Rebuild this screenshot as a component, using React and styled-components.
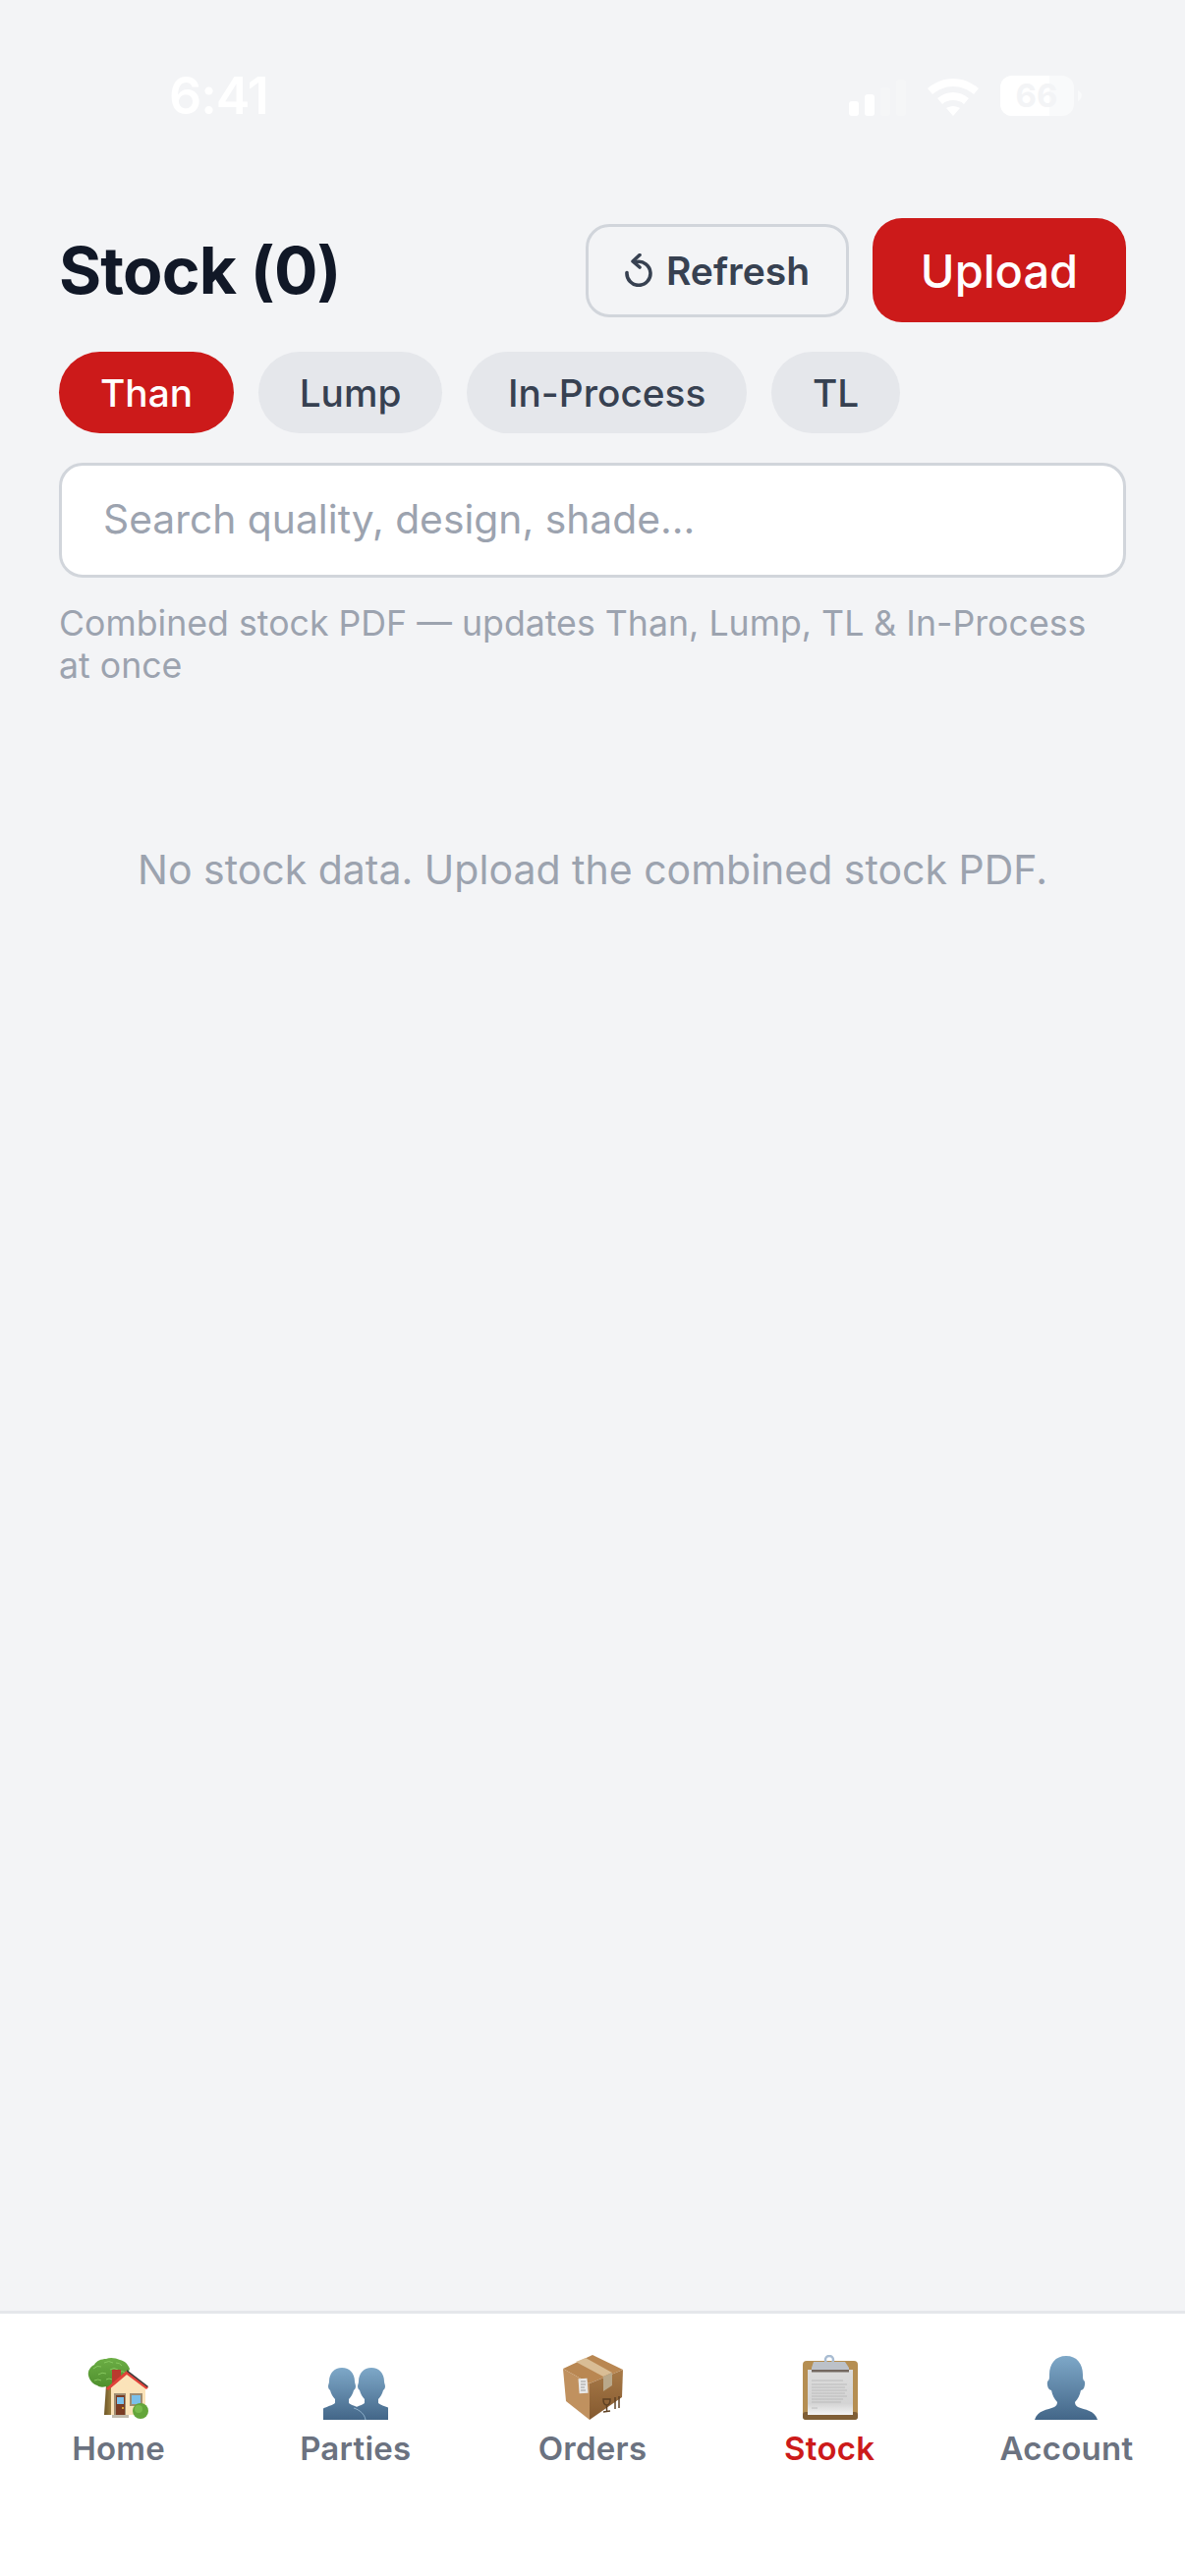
import styled, { createGlobalStyle } from "styled-components";

const GlobalStyle = createGlobalStyle`
  html, body { margin: 0; padding: 0; background: #f3f4f6; }
  * { box-sizing: border-box; }
  body { font-family: Inter, "Liberation Sans", sans-serif; }
`;

const Page = styled.div`
  height: 100vh;
  display: flex;
  flex-direction: column;
  background: #f3f4f6;
`;

const StatusBar = styled.div`
  height: 222px;
  flex: none;
  padding: 77px 105px 0 172px;
  display: flex;
  justify-content: space-between;
  align-items: flex-start;
  color: #fff;
`;

const Time = styled.span`
  font-size: 52px;
  line-height: 41px;
  font-weight: 600;
  letter-spacing: -1px;
`;

const StatusIcons = styled.div`
  display: flex;
  align-items: flex-end;
  height: 41px;
`;

const Main = styled.main`
  flex: 1;
  padding: 0 60px;
`;

const HeaderRow = styled.div`
  display: flex;
  align-items: center;
  justify-content: space-between;
  height: 106px;
`;

const Title = styled.h1`
  margin: 0;
  font-size: 66px;
  font-weight: 700;
  letter-spacing: -0.85px;
  color: #111827;
`;

const Actions = styled.div`
  display: flex;
  align-items: center;
  gap: 24px;
`;

const RefreshButton = styled.button`
  width: 268px;
  height: 95px;
  display: flex;
  align-items: center;
  justify-content: center;
  gap: 14px;
  padding: 0;
  background: transparent;
  border: 3px solid #d1d5db;
  border-radius: 24px;
  font: 600 39px Inter, sans-serif;
  color: #374151;
`;

const UploadButton = styled.button`
  width: 258px;
  height: 106px;
  padding: 0;
  background: #cc1a1a;
  border: 0;
  border-radius: 30px;
  font: 500 47px Inter, sans-serif;
  color: #fff;
`;

const Tabs = styled.div`
  display: flex;
  gap: 24.6px;
  margin-top: 30px;
`;

const Tab = styled.button`
  height: 83px;
  padding: 0 42px;
  border: 0;
  border-radius: 42px;
  background: ${(p) => (p.$active ? "#cc1a1a" : "#e5e7eb")};
  color: ${(p) => (p.$active ? "#fff" : "#374151")};
  font: 500 38.8px Inter, sans-serif;
`;

const SearchInput = styled.input`
  display: block;
  width: 100%;
  height: 117px;
  margin-top: 30px;
  padding: 0 42px 3px;
  background: #fff;
  border: 3px solid #d1d5db;
  border-radius: 24px;
  outline: none;
  font: 400 40.8px Inter, sans-serif;
  color: #111827;
  &::placeholder { color: #9ca3af; opacity: 1; }
`;

const Hint = styled.p`
  margin: 25px 0 0;
  font-size: 35.7px;
  line-height: 43px;
  color: #9ca3af;
`;

const Empty = styled.p`
  margin: 161px 0 0;
  text-align: center;
  font-size: 41px;
  line-height: 50px;
  color: #9ca3af;
`;

const Nav = styled.nav`
  flex: none;
  height: 270px;
  display: grid;
  grid-template-columns: repeat(5, 1fr);
  padding-top: 42px;
  background: #fff;
  border-top: 3px solid #e5e7eb;
`;

const NavItem = styled.div`
  display: flex;
  flex-direction: column;
  align-items: center;
  gap: 5px;
`;

const NavLabel = styled.span`
  font-size: 33px;
  line-height: 48px;
  font-weight: 600;
  letter-spacing: 0.25px;
  color: ${(p) => (p.$active ? "#cc1a1a" : "#6b7280")};
`;

const Signal = () => (
  <svg width="58" height="37" viewBox="0 0 58 37" fill="#fff">
    <rect x="0" y="22" width="10" height="15" rx="3" />
    <rect x="16" y="15" width="10" height="22" rx="3" />
    <rect x="32" y="8" width="10" height="29" rx="3" opacity="0.2" />
    <rect x="48" y="0" width="10" height="37" rx="3" opacity="0.2" />
  </svg>
);

const Wifi = () => (
  <svg width="52" height="38" viewBox="0 0 52 38" fill="#fff" style={{ marginLeft: 22 }}>
    <path d="M26 0c10 0 19 4 26 10l-5 6C41 11 34 8 26 8S11 11 5 16l-5-6C7 4 16 0 26 0z" />
    <path d="M26 14c6 0 11 2 16 6l-5 6c-3-3-7-4-11-4s-8 1-11 4l-5-6c5-4 10-6 16-6z" />
    <path d="M26 28c3 0 5 1 7 2l-7 8-7-8c2-1 4-2 7-2z" />
  </svg>
);

const Battery = () => (
  <svg width="83" height="41" viewBox="0 0 83 41" style={{ marginLeft: 22 }}>
    <defs>
      <clipPath id="batFill"><rect x="0" y="0" width="50" height="41" /></clipPath>
    </defs>
    <rect width="75" height="41" rx="12" fill="#fff" opacity="0.5" />
    <rect width="75" height="41" rx="12" fill="#fff" clipPath="url(#batFill)" />
    <path d="M79 15c2 1 4 3 4 5s-2 5-4 6z" fill="#fff" opacity="0.5" />
    <text x="37" y="32" textAnchor="middle" fontFamily="Inter" fontWeight="700" fontSize="33" fill="#f3f4f6">66</text>
  </svg>
);

const RefreshIcon = () => (
  <svg width="28" height="34" viewBox="0 0 28 34" fill="none" stroke="#374151" strokeWidth="3.6" strokeLinecap="round" strokeLinejoin="round">
    <path d="M12 8.500a12 12 0 1 1-10 11" />
    <path d="M15 1.500L8 8l7 6" />
  </svg>
);

const EmojiSvg = styled.svg`
  display: block;
  width: 66px;
  height: 66px;
`;

const HomeEmoji = () => (
  <EmojiSvg viewBox="0 0 66 66">
    <defs>
      <linearGradient id="trunkFill" x1="0" y1="0" x2="1" y2="0">
        <stop offset="0" stopColor="#6d5524" />
        <stop offset="1" stopColor="#a88c4c" />
      </linearGradient>
      <linearGradient id="crownFill" x1="0" y1="0" x2="0" y2="1">
        <stop offset="0" stopColor="#6cae45" />
        <stop offset="1" stopColor="#4f8f2e" />
      </linearGradient>
    </defs>
    <path d="M20 30h6l1 31h-9z" fill="url(#trunkFill)" />
    <path
      d="M2 21c-1-5 2-9 6-11 2-4 7-6 12-6 4-2 10-1 14 1 5 1 8 4 10 9l-6 16-18 2c-3 1-7 1-9-1-4-1-8-5-9-10z"
      fill="url(#crownFill)"
    />
    <g fill="none" stroke="#86c75e" strokeWidth="1">
      <path d="M7 14q4-4 8-2M18 8q5-3 9 0M30 8q4 0 6 3M12 20q4-3 8-1M24 15q4-3 8 0M34 17q3-1 5 1M8 26q4-2 7 0M20 25q3-2 6 0" />
    </g>
    <rect x="26" y="15" width="9" height="14" fill="#b93a2e" />
    <path d="M25 33l16-14 19 14v28H25z" fill="#fbe3b9" />
    <path d="M20 34L41 16l22 17-2 2-20-15-19 16z" fill="#e2423a" />
    <path d="M41 15l22 17-1 1-21-16z" fill="#3d3a3a" />
    <rect x="28" y="39" width="12" height="22" fill="#a08d72" />
    <rect x="30" y="41" width="9" height="20" fill="#7a3c24" />
    <rect x="31" y="43" width="7" height="7" fill="#7cc0ea" />
    <circle cx="37" cy="54" r="1" fill="#f3c13a" />
    <rect x="44" y="39" width="13" height="13" fill="#a08d72" />
    <rect x="46" y="41" width="9" height="9" fill="#7cc0ea" />
    <rect x="26" y="61" width="17" height="3" fill="#c2bcae" />
    <circle cx="55" cy="57" r="8" fill="#63a53a" />
    <circle cx="53" cy="55" r="4" fill="#79bb4c" />
  </EmojiSvg>
);

const personPath = (cx) =>
  `M${cx} 13c8 0 13 6 13 14 0 2 1 3 1 5s-1 3-2 4c-1 4-3 7-5 9v4c3 3 13 4 14 8 1 2 1 6 1 9H${cx - 22}c0-3 0-7 1-9 1-4 11-5 14-8v-4c-2-2-4-5-5-9-1-1-2-2-2-4s1-3 1-5c0-8 5-14 13-14z`;

const PartiesEmoji = () => (
  <EmojiSvg viewBox="0 0 66 66">
    <defs>
      <linearGradient id="partyBlue" x1="0" y1="0" x2="0" y2="1">
        <stop offset="0" stopColor="#7ea8c8" />
        <stop offset="1" stopColor="#436688" />
      </linearGradient>
    </defs>
    <path d={personPath(49)} fill="url(#partyBlue)" />
    <path d={personPath(19)} fill="url(#partyBlue)" />
    <path d="M31 54c6 2 11 6 12 12" fill="none" stroke="#8fb1cc" strokeWidth="1" />
  </EmojiSvg>
);

const OrdersEmoji = () => (
  <EmojiSvg viewBox="0 0 66 66">
    <defs>
      <linearGradient id="boxSide" x1="0" y1="0" x2="0" y2="1">
        <stop offset="0" stopColor="#a87a48" />
        <stop offset="1" stopColor="#84592f" />
      </linearGradient>
    </defs>
    <path d="M33 0L3 14l27 15 34-14z" fill="#b98752" />
    <path d="M3 14l27 15v37L6 47z" fill="#c0915f" />
    <path d="M30 29l34-14-1 28-33 23z" fill="url(#boxSide)" />
    <path d="M16 7l10-4 27 15-9 4z" fill="#d9bd95" />
    <path d="M44 22l9-4v13l-9 6z" fill="#b9a88a" />
    <rect x="19" y="24" width="9" height="15" fill="#e8e8e8" transform="rotate(-4 23 31)" />
    <path d="M21 27h5M21 30h5M21 33h4M21 36h5" stroke="#8a8a8a" strokeWidth="0.8" />
    <g stroke="#5f4224" strokeWidth="1.500" fill="none">
      <path d="M44 45h7c0 4-1 6-3.500 6S44 49 44 45zM47.500 51v6M44 58l7-1" />
      <path d="M56 43v12M60 42v12" />
    </g>
  </EmojiSvg>
);

const StockEmoji = () => (
  <EmojiSvg viewBox="0 0 66 66">
    <defs>
      <linearGradient id="paperFade" x1="0" y1="0" x2="0" y2="1">
        <stop offset="0" stopColor="#dcdcdc" />
        <stop offset="0.75" stopColor="#d4d4d4" />
        <stop offset="1" stopColor="#f4f4f4" />
      </linearGradient>
    </defs>
    <rect x="6" y="6" width="56" height="60" rx="4" fill="#b58e52" />
    <rect x="6" y="58" width="56" height="8" rx="3" fill="#7f5e36" />
    <rect x="11" y="15" width="46" height="46" fill="url(#paperFade)" />
    <circle cx="33" cy="5" r="4" fill="none" stroke="#a9bcd2" strokeWidth="2.500" />
    <path d="M17 7h32l4 6v3H15v-3z" fill="#bcc1c8" />
    <rect x="15" y="15" width="38" height="2.500" fill="#736860" />
    <path d="M15 26h32M15 30h36M15 33h34M15 36h36M15 39h34M15 42h36M15 45h32M15 48h30M15 54h6" stroke="#b5b5b5" strokeWidth="0.8" />
  </EmojiSvg>
);

const AccountEmoji = () => (
  <EmojiSvg viewBox="0 0 66 66">
    <defs>
      <linearGradient id="accBlue" x1="0" y1="0" x2="0" y2="1">
        <stop offset="0" stopColor="#7ea8c8" />
        <stop offset="1" stopColor="#436688" />
      </linearGradient>
    </defs>
    <path
      d="M33 1c11 0 17 8 17 19 0 3 0 5 1 6 2 1 1 6 0 8-1 1-2 2-3 2-1 5-3 9-6 12 0 2 1 4 3 5 7 3 17 3 20 13H1c3-10 13-10 20-13 2-1 3-3 3-5-3-3-5-7-6-12-1 0-2-1-3-2-1-2-2-7 0-8 1-1 1-3 1-6C16 9 22 1 33 1z"
      fill="url(#accBlue)"
    />
  </EmojiSvg>
);

const tabs = ["Than", "Lump", "In-Process", "TL"];

const navItems = [
  { label: "Home", Icon: HomeEmoji },
  { label: "Parties", Icon: PartiesEmoji },
  { label: "Orders", Icon: OrdersEmoji },
  { label: "Stock", Icon: StockEmoji, active: true },
  { label: "Account", Icon: AccountEmoji },
];

const App = () => {
  return (
    <Page>
      <GlobalStyle />
      <StatusBar>
        <Time>6:41</Time>
        <StatusIcons>
          <Signal />
          <Wifi />
          <Battery />
        </StatusIcons>
      </StatusBar>
      <Main>
        <HeaderRow>
          <Title>Stock (0)</Title>
          <Actions>
            <RefreshButton>
              <RefreshIcon />
              Refresh
            </RefreshButton>
            <UploadButton>Upload</UploadButton>
          </Actions>
        </HeaderRow>
        <Tabs>
          {tabs.map((t) => (
            <Tab key={t} $active={t === "Than"}>{t}</Tab>
          ))}
        </Tabs>
        <SearchInput placeholder="Search quality, design, shade..." />
        <Hint>Combined stock PDF — updates Than, Lump, TL &amp; In-Process at once</Hint>
        <Empty>No stock data. Upload the combined stock PDF.</Empty>
      </Main>
      <Nav>
        {navItems.map(({ label, Icon, active }) => (
          <NavItem key={label}>
            <Icon />
            <NavLabel $active={active}>{label}</NavLabel>
          </NavItem>
        ))}
      </Nav>
    </Page>
  );
};

export default App;
